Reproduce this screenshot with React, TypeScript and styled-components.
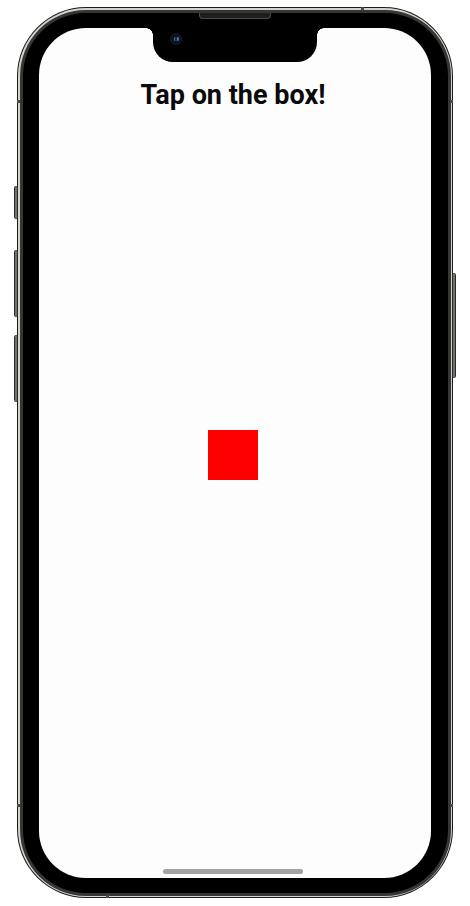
import React from "react";
import styled, { createGlobalStyle } from "styled-components";

const Global = createGlobalStyle`
  html, body { margin: 0; padding: 0; background: #ffffff; }
  body { font-family: Roboto, "Liberation Sans", Arial, sans-serif; }
`;

const Page = styled.div`
  width: 470px;
  height: 906px;
  box-sizing: border-box;
  padding: 7px 17px 8px;
  background: #ffffff;
  display: flex;
  justify-content: center;
`;

const Phone = styled.div`
  position: relative;
  width: 436px;
  height: 891px;
  box-sizing: border-box;
  border-radius: 69px;
  background: #1b1b1b;
  padding: 1px;
  display: flex;
`;

const Ring = styled.div`
  flex: 1;
  display: flex;
  border-radius: 68px;
  background: #d6d3cc;
  padding: 1.5px;
`;

const Band = styled.div`
  flex: 1;
  display: flex;
  border-radius: 66px;
  background: #363634;
  padding: 3px;
`;

const Bezel = styled.div`
  flex: 1;
  display: flex;
  border-radius: 63px;
  background: #000;
  padding: 15.5px 16.5px 14.5px 16.5px;
`;

const Screen = styled.div`
  position: relative;
  flex: 1;
  display: flex;
  flex-direction: column;
  align-items: center;
  border-radius: 47px;
  background: #fdfdfd;
  overflow: hidden;
  padding-right: 4px;
`;

const Notch = styled.div`
  position: absolute;
  top: 0;
  left: 114px;
  width: 164px;
  height: 34px;
  box-sizing: border-box;
  padding: 5px 0 0 17px;
  background: #000;
  border-radius: 0 0 20px 20px;

  &::before,
  &::after {
    content: "";
    position: absolute;
    top: 0;
    width: 7px;
    height: 7px;
  }
  &::before {
    left: -7px;
    background: radial-gradient(circle at 0 100%, transparent 6.5px, #000 7px);
  }
  &::after {
    right: -7px;
    background: radial-gradient(circle at 100% 100%, transparent 6.5px, #000 7px);
  }
`;

const Camera = styled.div`
  position: relative;
  width: 12px;
  height: 12px;
  border-radius: 50%;
  background: radial-gradient(circle at 50% 50%, #1b2a3e 0 2px, #0b1119 3px, #141820 6px);

  &::before,
  &::after {
    content: "";
    position: absolute;
    top: 4px;
    width: 1.5px;
    height: 4px;
    border-radius: 1px;
  }
  &::before {
    left: 3.5px;
    background: #2c6a8a;
  }
  &::after {
    right: 3.5px;
    background: #3f6fc0;
  }
`;

const Speaker = styled.div`
  position: absolute;
  top: 6px;
  left: 182px;
  width: 72px;
  height: 6px;
  box-sizing: border-box;
  border-radius: 0 0 4px 4px;
  background: #1e1e1e;
  border: 1px solid #4a4a48;
  border-top: none;
`;

const ButtonRail = styled.div<{ $side: "left" | "right"; $top: number }>`
  position: absolute;
  ${(p) => (p.$side === "left" ? "left: -3px;" : "right: -3px;")}
  top: ${(p) => p.$top}px;
  display: flex;
  flex-direction: column;
`;

const SideButton = styled.div<{ $h: number; $gap?: number }>`
  width: 4px;
  height: ${(p) => p.$h}px;
  margin-top: ${(p) => p.$gap ?? 0}px;
  box-sizing: border-box;
  border-radius: 1.5px;
  background: linear-gradient(90deg, #5a5a58, #8a8884 50%, #5a5a58);
  border: 1px solid #2a2a2a;
`;

const Antenna = styled.div<{ $x: number; $y: number }>`
  position: absolute;
  left: ${(p) => p.$x}px;
  top: ${(p) => p.$y}px;
  width: 3px;
  height: 3px;
  background: #4a4a48;
`;

const Title = styled.h1`
  margin: 51px 0 0;
  font-family: Roboto, "Liberation Sans", Arial, sans-serif;
  font-weight: 700;
  font-size: 27px;
  line-height: 32px;
  color: #0a0a0a;
  letter-spacing: 0;
`;

const Box = styled.div`
  margin-top: 319px;
  width: 50px;
  height: 50px;
  background: #ff0000;
`;

const Spacer = styled.div`
  flex: 1;
`;

const HomeIndicator = styled.div`
  width: 140px;
  height: 5px;
  border-radius: 3px;
  background: #a3a3a3;
  margin-bottom: 4px;
`;

const antennaMarks = [
  { x: 344, y: 0 },
  { x: 0, y: 93 },
  { x: 433, y: 93 },
  { x: 0, y: 797 },
  { x: 433, y: 797 },
  { x: 89, y: 888 },
];

export default function App() {
  return (
    <>
      <Global />
      <Page>
        <Phone>
          <Ring>
            <Band>
              <Bezel>
                <Screen>
                  <Title>Tap on the box!</Title>
                  <Box />
                  <Spacer />
                  <HomeIndicator />
                  <Notch>
                    <Camera />
                  </Notch>
                </Screen>
              </Bezel>
            </Band>
          </Ring>
          <Speaker />
          <ButtonRail $side="left" $top={179}>
            <SideButton $h={33} />
            <SideButton $h={67} $gap={31} />
            <SideButton $h={67} $gap={18} />
          </ButtonRail>
          <ButtonRail $side="right" $top={266}>
            <SideButton $h={105} />
          </ButtonRail>
          {antennaMarks.map((m, i) => (
            <Antenna key={i} $x={m.x} $y={m.y} />
          ))}
        </Phone>
      </Page>
    </>
  );
}
